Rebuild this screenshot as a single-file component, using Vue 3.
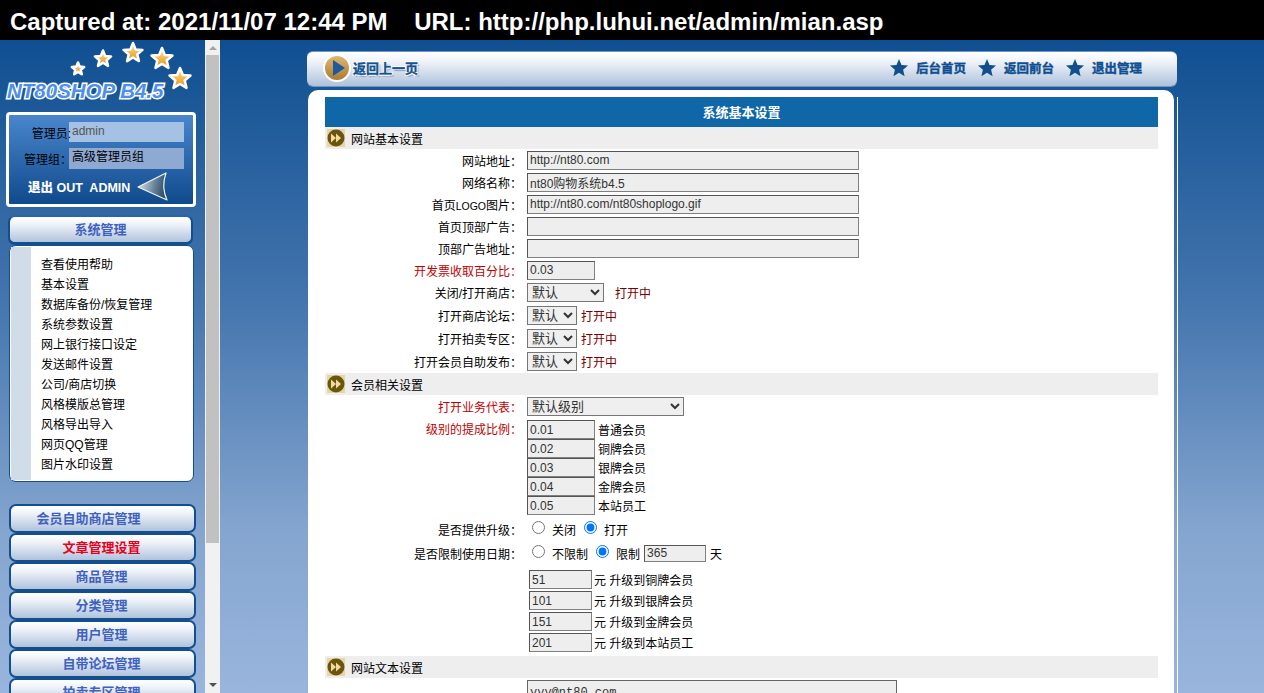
<template>
  <div class="page">
    <div class="capture">{{ captureText }}</div>
    <div class="frames">
      <aside class="side">
        <div class="logo">
          <svg class="logo-stars" width="205" height="72" viewBox="0 0 205 72">
            <defs>
              <linearGradient id="gold" x1="0" y1="0" x2="0" y2="1">
                <stop offset="0" stop-color="#fde3a0" />
                <stop offset="1" stop-color="#e8920f" />
              </linearGradient>
            </defs>
            <polygon
              v-for="s in logoStars"
              :key="s.x"
              :points="starPoints(s.x, s.y, s.r)"
              fill="url(#gold)"
              stroke="#fff"
              stroke-width="2.5"
              stroke-linejoin="round"
            />
          </svg>
          <div class="logo-text">NT80SHOP B4.5</div>
        </div>

        <div class="admin-box">
          <div class="admin-row">
            <span class="admin-label label-a">管理员:</span>
            <span class="admin-val val-a">admin</span>
          </div>
          <div class="admin-row row-b">
            <span class="admin-label label-b">管理组：</span>
            <span class="admin-val val-b">高级管理员组</span>
          </div>
          <div class="admin-out">
            <span class="out-text"><b>退出</b> OUT&nbsp; ADMIN</span>
            <svg width="32" height="29" viewBox="0 0 32 29">
              <defs>
                <linearGradient id="arrow" x1="0" y1="0" x2="1" y2="0.2">
                  <stop offset="0" stop-color="#e6ecef" />
                  <stop offset="0.7" stop-color="#5d7a90" />
                  <stop offset="1" stop-color="#2f5068" />
                </linearGradient>
              </defs>
              <path d="M1 15 L29 1 Q24 15 30 28 Z" fill="url(#arrow)" stroke="#eef2f5" stroke-width="1.2" stroke-linejoin="round" />
            </svg>
          </div>
        </div>

        <div class="menu-head">系统管理</div>
        <div class="menu-panel">
          <div class="menu-strip"></div>
          <ul class="menu-list">
            <li v-for="m in menuItems" :key="m">{{ m }}</li>
          </ul>
        </div>

        <div class="nav-list">
          <div
            v-for="n in navItems"
            :key="n.text"
            class="nav-btn"
            :class="{ 'nav-red': n.red, 'nav-wide': n.wide }"
          >
            {{ n.text }}
          </div>
        </div>
      </aside>

      <div class="scrollbar">
        <span class="sb-arrow sb-up"></span>
        <div class="sb-track"><div class="sb-thumb"></div></div>
        <span class="sb-arrow sb-down"></span>
      </div>

      <main class="main">
        <div class="toolbar">
          <div class="back">
            <svg width="28" height="28" viewBox="0 0 28 28">
              <defs>
                <linearGradient id="bronze" x1="0" y1="0" x2="0" y2="1">
                  <stop offset="0" stop-color="#e0b873" />
                  <stop offset="1" stop-color="#a87a32" />
                </linearGradient>
              </defs>
              <circle cx="14" cy="14" r="13" fill="url(#bronze)" stroke="#fff" stroke-width="2" />
              <path d="M10 6 L22 14 L10 22 Z" fill="#1b5a9c" />
            </svg>
            <span class="back-text">返回上一页</span>
          </div>
          <div class="tool-links">
            <div v-for="l in toolLinks" :key="l" class="tool-link">
              <svg width="18" height="18" viewBox="0 0 18 18">
                <polygon :points="starPoints(9, 9.5, 9.5)" fill="#0f4f90" />
              </svg>
              <span>{{ l }}</span>
            </div>
          </div>
        </div>

        <div class="panel">
          <div class="form">
            <div class="form-title">系统基本设置</div>

            <div class="section">
              <svg class="sec-icon" width="18" height="18" viewBox="0 0 18 18">
                <rect width="18" height="18" fill="#e6d6a0" />
                <circle cx="9" cy="9" r="8.5" fill="#6b5412" />
                <path d="M4 4.5 L9 9 L4 13.5 Z M9 4.5 L14 9 L9 13.5 Z" fill="#f1dd98" />
              </svg>
              网站基本设置
            </div>

            <div v-for="r in textRows" :key="r.label" class="row">
              <label class="lbl" :class="{ red: r.red }">{{ r.pre }}<span v-if="r.latin" class="latin">{{ r.latin }}</span>{{ r.label }}：</label>
              <input class="field" :class="r.short ? 'f-short' : 'f-long'" :value="r.value" />
            </div>

            <div class="row row-sel">
              <label class="lbl">关闭/打开商店：</label>
              <select class="sel sel-mid"><option>默认</option></select>
              <span class="state state-far">打开中</span>
            </div>
            <div v-for="s in selectRows" :key="s" class="row row-sel">
              <label class="lbl">{{ s }}：</label>
              <select class="sel sel-small"><option>默认</option></select>
              <span class="state">打开中</span>
            </div>

            <div class="section">
              <svg class="sec-icon" width="18" height="18" viewBox="0 0 18 18">
                <rect width="18" height="18" fill="#e6d6a0" />
                <circle cx="9" cy="9" r="8.5" fill="#6b5412" />
                <path d="M4 4.5 L9 9 L4 13.5 Z M9 4.5 L14 9 L9 13.5 Z" fill="#f1dd98" />
              </svg>
              会员相关设置
            </div>

            <div class="row row-sel">
              <label class="lbl red">打开业务代表：</label>
              <select class="sel sel-large"><option>默认级别</option></select>
            </div>
            <div class="row-block">
              <label class="lbl red lbl-top">级别的提成比例：</label>
              <div class="levels">
                <div v-for="l in levels" :key="l.name" class="level">
                  <input class="field f-short" :value="l.value" />
                  <span>{{ l.name }}</span>
                </div>
              </div>
            </div>

            <div class="row row-sel row-radio">
              <label class="lbl">是否提供升级：</label>
              <input class="radio" type="radio" name="up" />
              <span class="radio-text">关闭</span>
              <input class="radio" type="radio" name="up" checked />
              <span class="radio-text">打开</span>
            </div>
            <div class="row row-sel row-radio row-limit">
              <label class="lbl">是否限制使用日期：</label>
              <input class="radio" type="radio" name="limit" />
              <span class="radio-text">不限制</span>
              <input class="radio" type="radio" name="limit" checked />
              <span class="radio-text">限制</span>
              <input class="field f-days" value="365" />
              <span class="days">天</span>
            </div>

            <div class="upgrades">
              <div v-for="u in upgrades" :key="u.value" class="upgrade">
                <input class="field f-up" :value="u.value" />
                <span>元 升级到{{ u.name }}</span>
              </div>
            </div>

            <div class="section">
              <svg class="sec-icon" width="18" height="18" viewBox="0 0 18 18">
                <rect width="18" height="18" fill="#e6d6a0" />
                <circle cx="9" cy="9" r="8.5" fill="#6b5412" />
                <path d="M4 4.5 L9 9 L4 13.5 Z M9 4.5 L14 9 L9 13.5 Z" fill="#f1dd98" />
              </svg>
              网站文本设置
            </div>
            <div class="row-area">
              <textarea class="area" rows="3">yyy@nt80.com</textarea>
            </div>
          </div>
        </div>
      </main>
    </div>
  </div>
</template>

<script setup>
const captureText = "Captured at: 2021/11/07 12:44 PM    URL: http://php.luhui.net/admin/mian.asp"

const logoStars = [
  { x: 78, y: 29, r: 6.5 },
  { x: 103, y: 19, r: 8.5 },
  { x: 133, y: 13, r: 10 },
  { x: 162, y: 19, r: 11 },
  { x: 180, y: 39, r: 11 },
]

function starPoints(cx, cy, r) {
  const pts = []
  for (let i = 0; i < 10; i++) {
    const rad = i % 2 ? r * 0.45 : r
    const a = (Math.PI / 5) * i - Math.PI / 2
    pts.push(`${(cx + rad * Math.cos(a)).toFixed(1)},${(cy + rad * Math.sin(a)).toFixed(1)}`)
  }
  return pts.join(" ")
}

const menuItems = [
  "查看使用帮助",
  "基本设置",
  "数据库备份/恢复管理",
  "系统参数设置",
  "网上银行接口设定",
  "发送邮件设置",
  "公司/商店切换",
  "风格模版总管理",
  "风格导出导入",
  "网页QQ管理",
  "图片水印设置",
]

const navItems = [
  { text: "会员自助商店管理", wide: true },
  { text: "文章管理设置", red: true },
  { text: "商品管理" },
  { text: "分类管理" },
  { text: "用户管理" },
  { text: "自带论坛管理" },
  { text: "拍卖专区管理" },
]

const toolLinks = ["后台首页", "返回前台", "退出管理"]

const textRows = [
  { label: "网站地址", value: "http://nt80.com" },
  { label: "网络名称", value: "nt80购物系统b4.5" },
  { pre: "首页", latin: "LOGO", label: "图片", value: "http://nt80.com/nt80shoplogo.gif" },
  { label: "首页顶部广告", value: "" },
  { label: "顶部广告地址", value: "" },
  { label: "开发票收取百分比", value: "0.03", short: true, red: true },
]

const selectRows = ["打开商店论坛", "打开拍卖专区", "打开会员自助发布"]

const levels = [
  { value: "0.01", name: "普通会员" },
  { value: "0.02", name: "铜牌会员" },
  { value: "0.03", name: "银牌会员" },
  { value: "0.04", name: "金牌会员" },
  { value: "0.05", name: "本站员工" },
]

const upgrades = [
  { value: "51", name: "铜牌会员" },
  { value: "101", name: "银牌会员" },
  { value: "151", name: "金牌会员" },
  { value: "201", name: "本站员工" },
]
</script>

<style>
html,
body {
  overflow: hidden;
}
</style>

<style scoped>
.page {
  height: 693px;
  overflow: hidden;
  font-family: "Liberation Sans", "Noto Sans CJK SC", sans-serif;
  font-size: 12px;
  color: #000;
}

.capture {
  height: 40px;
  line-height: 44px;
  padding-left: 10px;
  background: #000;
  color: #fff;
  font-size: 24px;
  font-weight: bold;
  white-space: pre;
}

.frames {
  display: flex;
  height: 653px;
  background: linear-gradient(#0f4f91 0%, #4475ae 40%, #84a5cf 75%, #99b5dd 100%);
}

/* left column */
.side {
  width: 205px;
  flex: none;
  overflow: hidden;
}

.logo {
  position: relative;
  height: 72px;
}

.logo-stars {
  position: absolute;
  left: 0;
  top: 0;
}

.logo-text {
  position: absolute;
  left: 7px;
  top: 39px;
  font-family: "Liberation Sans", sans-serif;
  font-size: 20.5px;
  font-weight: bold;
  font-style: italic;
  line-height: 24px;
  color: #4f8fe8;
  -webkit-text-stroke: 3px #fff;
  paint-order: stroke fill;
  white-space: nowrap;
}

.admin-box {
  margin-left: 6px;
  width: 190px;
  height: 95px;
  box-sizing: border-box;
  border: 3px solid #fff;
  border-radius: 4px;
  background: linear-gradient(#4a86cc, #0f4a8c);
  padding-top: 7px;
}

.admin-row {
  display: flex;
  align-items: center;
  height: 20px;
}

.row-b {
  height: 21px;
  margin-top: 6px;
}

.admin-label {
  flex: none;
  text-align: right;
  color: #000;
  white-space: nowrap;
}

.label-a {
  width: 62px;
  margin-right: -2px;
  position: relative;
  z-index: 1;
}

.label-b {
  width: 63px;
  margin-right: -3px;
  position: relative;
  z-index: 1;
}

.admin-val {
  width: 115px;
  line-height: 19px;
  flex: none;
  box-sizing: border-box;
  padding-left: 3px;
}

.val-a {
  height: 20px;
  background: #a5c1e4;
  color: #555;
}

.val-b {
  height: 21px;
  background: #8ea9d2;
  color: #000;
}

.admin-out {
  display: flex;
  align-items: center;
  margin-top: 3px;
  padding-left: 19px;
  gap: 7px;
}

.out-text {
  color: #fff;
  font-weight: bold;
  font-size: 12.5px;
  white-space: nowrap;
}

.menu-head,
.nav-btn {
  box-sizing: border-box;
  border: 2px solid #134f8f;
  border-radius: 7px;
  background: linear-gradient(#fff 0%, #eef2f8 30%, #b0c3dc 100%);
  color: #3f62c0;
  font-size: 13px;
  font-weight: bold;
  text-align: center;
}

.menu-head {
  margin: 8px 0 0 8px;
  width: 185px;
  height: 30px;
  line-height: 25px;
  border-top-color: #2a65a8;
  border-bottom-width: 3px;
}

.menu-panel {
  display: flex;
  margin: 0 0 0 9px;
  width: 185px;
  height: 237px;
  box-sizing: border-box;
  border: 1px solid #134f8f;
  border-radius: 7px;
  background: #fff;
  padding: 1px;
}

.menu-strip {
  width: 20px;
  flex: none;
  background: #d0dde9;
}

.menu-list {
  list-style: none;
  margin: 0;
  padding: 8px 0 0 10px;
}

.menu-list li {
  height: 20px;
  line-height: 20px;
  white-space: nowrap;
}

.nav-list {
  margin: 22px 0 0 9px;
  width: 187px;
}

.nav-btn {
  height: 29px;
  line-height: 25px;
  padding-right: 2px;
}

.nav-wide {
  padding-right: 28px;
}

.nav-red {
  color: #e8001c;
}

/* fake frame scrollbar */
.scrollbar {
  width: 15px;
  flex: none;
  background: #f1f1f1;
  display: flex;
  flex-direction: column;
  align-items: center;
}

.sb-arrow {
  width: 0;
  height: 0;
  border-left: 4px solid transparent;
  border-right: 4px solid transparent;
  margin: 6px 0;
  flex: none;
}

.sb-up {
  border-bottom: 4px solid #a3a3a3;
}

.sb-down {
  border-top: 4px solid #505050;
}

.sb-track {
  flex: 1;
  width: 100%;
}

.sb-thumb {
  width: 13px;
  margin: -1px auto 0;
  height: 488px;
  background: #c1c1c1;
}

/* main frame */
.main {
  flex: 1;
  min-width: 0;
  padding: 11px 0 0 87px;
}

.toolbar {
  width: 870px;
  height: 35px;
  box-sizing: border-box;
  border-radius: 6px;
  border-top: 1px solid #6f97c4;
  background: linear-gradient(#fff 0%, #eef2f8 30%, #aec2db 100%);
  box-shadow: 0 1px 0 #6f97c4;
  display: flex;
  align-items: center;
  justify-content: space-between;
  padding: 0 35px 3px 16px;
}

.back {
  display: flex;
  align-items: center;
  gap: 2px;
}

.back-text {
  font-size: 13px;
  font-weight: bold;
  color: #16538f;
  -webkit-text-stroke: 0.4px #16538f;
  text-shadow: 1px 1px 0 #fff, -1px -1px 0 #fff, 1px -1px 0 #fff, -1px 1px 0 #fff, 2px 2px 1px #8a9db5;
}

.tool-links {
  display: flex;
  gap: 12px;
}

.tool-link {
  display: flex;
  align-items: center;
  gap: 8px;
  font-size: 12.5px;
  font-weight: bold;
  color: #0f4f90;
  -webkit-text-stroke: 0.4px #0f4f90;
}

.panel {
  position: relative;
  margin: 4px 0 0 1px;
  width: 866px;
  height: 620px;
  box-sizing: border-box;
  background: #fff;
  border-radius: 10px 10px 0 0;
  padding: 7px 16px 0 17px;
}

.panel::after {
  content: "";
  position: absolute;
  top: 7px;
  bottom: 0;
  right: -4px;
  width: 1px;
  background: #fff;
}

.form-title {
  height: 30px;
  line-height: 31px;
  text-align: center;
  background: #0f67a8;
  color: #fff;
  font-size: 13px;
  font-weight: bold;
}

.section {
  display: flex;
  align-items: center;
  height: 22px;
  padding-left: 2px;
  background: #eee;
  gap: 6px;
}

.sec-icon {
  flex: none;
}

.row,
.row-block {
  display: flex;
  align-items: center;
  gap: 5px;
  height: 22px;
}

.row-sel {
  height: 23px;
}

.row-block {
  align-items: flex-start;
  height: 100px;
}

.lbl {
  width: 197px;
  flex: none;
  text-align: right;
  white-space: nowrap;
}

.latin {
  font-size: 10.5px;
}

.lbl-top {
  line-height: 24px;
}

.red {
  color: #c00000;
}

.field {
  box-sizing: border-box;
  height: 19px;
  padding: 0 2px;
  border: 1px solid #808080;
  border-top-color: #555;
  border-left-color: #555;
  background: #eee;
  color: #333;
  font-family: "Liberation Sans", "Noto Sans CJK SC", sans-serif;
  font-size: 12px;
  border-radius: 0;
  outline: none;
}

.f-long {
  width: 332px;
}

.f-short {
  width: 68px;
}

.f-days {
  width: 62px;
  height: 17px;
  margin-left: 1px;
}

.f-up {
  width: 63px;
}

.sel {
  box-sizing: border-box;
  height: 19px;
  border: 1px solid #767676;
  background: #efefef;
  color: #333;
  font-family: "Liberation Sans", "Noto Sans CJK SC", sans-serif;
  font-size: 13px;
  padding: 0;
  border-radius: 0;
}

.sel-mid {
  width: 77px;
}

.sel-small {
  width: 50px;
}

.sel-large {
  width: 157px;
}

.state {
  color: #7a0000;
  margin-left: -1px;
}

.state-far {
  margin-left: 6px;
}

.levels {
  padding-top: 2px;
}

.level {
  display: flex;
  align-items: center;
  gap: 3px;
  height: 19px;
}

.row-radio {
  gap: 0;
}

.row-radio .lbl {
  margin-right: 5px;
}

.radio {
  width: 13px;
  height: 13px;
  margin: 0 7px 4px 5px;
  accent-color: #0075ff;
  flex: none;
}

.radio-text {
  margin-right: 3px;
}

.row-limit {
  height: 24px;
}

.days {
  margin-left: 4px;
}

.upgrades {
  padding: 4px 0 3px 204px;
}

.upgrade {
  display: flex;
  align-items: center;
  gap: 2px;
  height: 21px;
}

.row-area {
  padding: 2px 0 0 202px;
}

.area {
  display: block;
  box-sizing: border-box;
  width: 370px;
  height: 60px;
  padding: 5px 2px 0;
  border: 1px solid #666;
  background: #eee;
  color: #333;
  font-family: "Liberation Mono", monospace;
  font-size: 12px;
  border-radius: 0;
  resize: none;
  outline: none;
}
</style>
